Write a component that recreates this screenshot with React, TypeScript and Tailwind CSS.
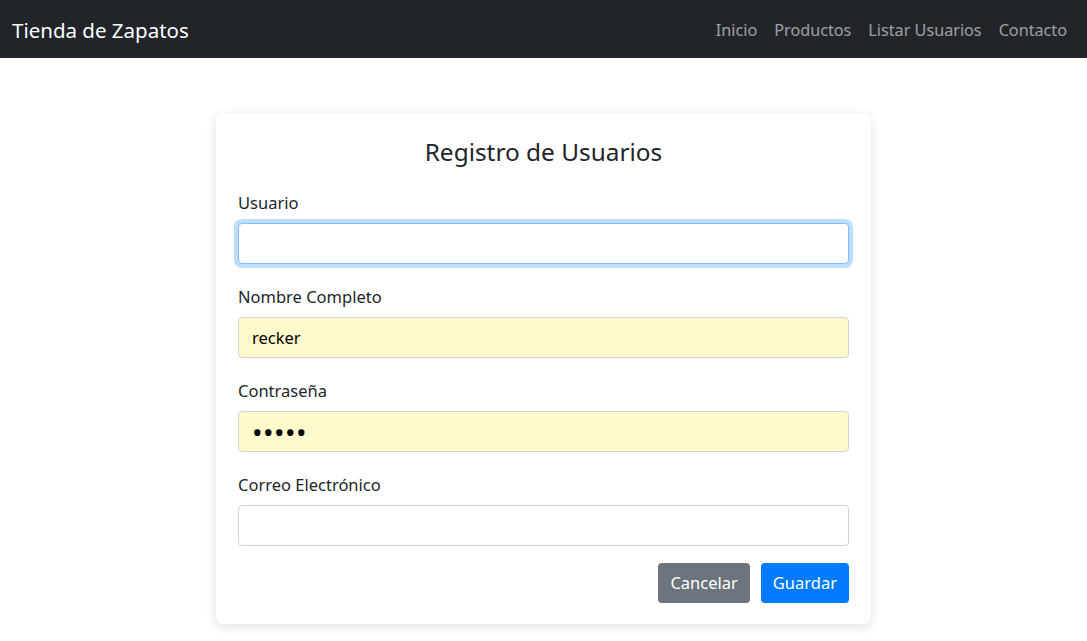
import React from 'react';

const links = ['Inicio', 'Productos', 'Listar Usuarios', 'Contacto'];

const Field: React.FC<{ label: string; value?: string; type?: string; focused?: boolean; filled?: boolean }> = ({
    label,
    value = '',
    type = 'text',
    focused,
    filled,
}) => (
    <div className="mb-[21px]">
        <label className="block mb-2 text-[16.5px] leading-[24px] text-[#212529]">{label}</label>
        <input
            type={type}
            defaultValue={value}
            readOnly
            className={
                'block w-full h-[41px] px-[13px] rounded-[4px] border text-black outline-none ' +
                (type === 'password' ? 'text-[28px] tracking-[0.5px] ' : 'text-[16.5px] ') +
                (focused
                    ? 'border-[#80bdff] bg-white shadow-[0_0_0_4px_rgba(0,123,255,0.25)]'
                    : filled
                      ? 'border-[#ced4da] bg-[#fefacb]'
                      : 'border-[#ced4da] bg-white')
            }
        />
    </div>
);

export default function App() {
    return (
        <div className="min-h-screen bg-white font-['Noto_Sans',sans-serif] text-[#212529]">
            <nav className="h-[58px] bg-[#212529] flex items-center justify-between pl-3 pr-5 pt-[3px]">
                <span className="text-white text-[20.5px]">Tienda de Zapatos</span>
                <div className="flex items-center gap-[17px]">
                    {links.map((l) => (
                        <a key={l} className="text-[16.2px] text-white/55">
                            {l}
                        </a>
                    ))}
                </div>
            </nav>

            <div className="flex justify-center pt-[55px]">
                <div className="w-[655px] bg-white rounded-lg shadow-[0_3px_12px_rgba(0,0,0,0.12)] px-[22px] pt-[23px] pb-[21px]">
                    <h2 className="text-center text-[24.4px] leading-[32px] mb-[23px]">Registro de Usuarios</h2>
                    <Field label="Usuario" focused />
                    <Field label="Nombre Completo" value="recker" filled />
                    <Field label="Contraseña" value="reckr" type="password" filled />
                    <div className="mb-[17px]">
                        <label className="block mb-2 text-[16.5px] leading-[24px]">Correo Electrónico</label>
                        <input
                            type="email"
                            readOnly
                            className="block w-full h-[41px] px-[13px] rounded-[4px] border border-[#ced4da] bg-white outline-none"
                        />
                    </div>
                    <div className="flex justify-end gap-[11px]">
                        <button className="h-[40px] px-[12px] rounded-[4px] bg-[#6c757d] text-white text-[16.5px]">
                            Cancelar
                        </button>
                        <button className="h-[40px] px-[12px] rounded-[4px] bg-[#007bff] text-white text-[16.5px]">
                            Guardar
                        </button>
                    </div>
                </div>
            </div>
        </div>
    );
}
